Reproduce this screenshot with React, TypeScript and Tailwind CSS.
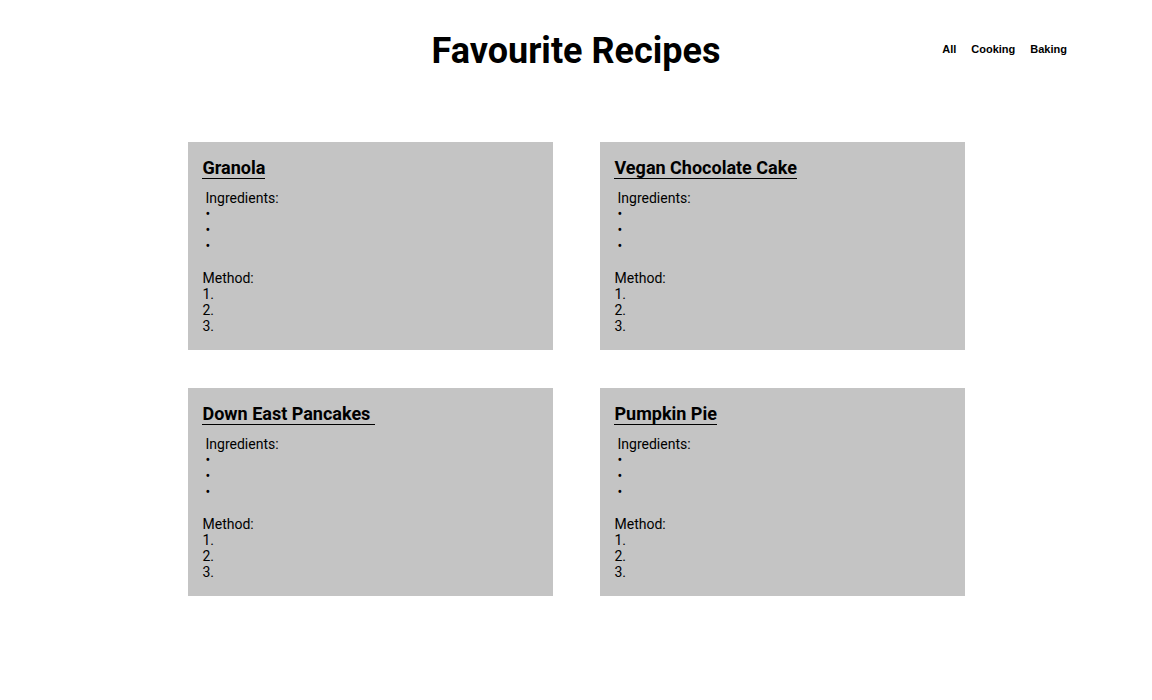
import React from "react";

const recipes = ["Granola", "Vegan Chocolate Cake", "Down East Pancakes\u00a0", "Pumpkin Pie"];

function Card({ title }: { title: string }) {
  return (
    <div className="bg-[#c4c4c4] h-[208px] pt-[15px] pl-[15px] text-black">
      <h2 className="inline-block border-b border-black text-[18px] font-bold leading-[20px] -ml-px pl-px">
        {title}
      </h2>
      <div className="mt-[9px] text-[14px] leading-[16px]">
        <div className="ml-[3px]">
          <div>Ingredients:</div>
          <div>•</div>
          <div>•</div>
          <div>•</div>
        </div>
        <div className="h-[16px]" />
        <div>Method:</div>
        <div>1.</div>
        <div>2.</div>
        <div>3.</div>
      </div>
    </div>
  );
}

export default function App() {
  return (
    <div className="min-h-[700px] bg-white" style={{ fontFamily: "Roboto, sans-serif" }}>
      <header className="grid grid-cols-[1fr_auto_1fr] items-start pt-[27px]">
        <div />
        <h1 className="text-[36px] font-bold leading-[48px] text-black">Favourite Recipes</h1>
        <nav
          className="flex justify-end gap-[15px] pr-[85px] pt-[14px] text-[11px] font-bold text-black"
          style={{ fontFamily: '"Liberation Sans", Arial, sans-serif' }}
        >
          <span>All</span>
          <span>Cooking</span>
          <span>Baking</span>
        </nav>
      </header>
      <main className="mx-auto mt-[67px] grid w-[777px] grid-cols-2 gap-x-[47px] gap-y-[38px]">
        {recipes.map((r) => (
          <Card key={r} title={r} />
        ))}
      </main>
    </div>
  );
}
